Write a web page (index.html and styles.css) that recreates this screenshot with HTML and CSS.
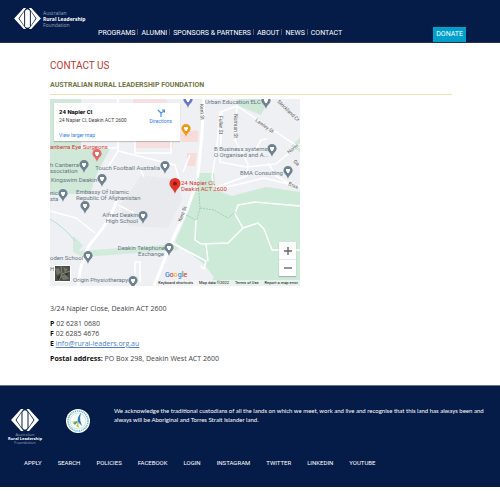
FILE: index.html
```html
<!DOCTYPE html>
<html lang="en">

<head>
  <meta charset="UTF-8">
  <meta name="viewport" content="width=device-width, initial-scale=1.0">
  <title>Contact Us - Australian Rural Leadership Foundation</title>
  <link rel="stylesheet" href="styles.css">
</head>

<body>
  <!-- shared symbols -->
  <svg class="defs" width="0" height="0" aria-hidden="true">
    <symbol id="mark" viewBox="0 0 56 44">
      <path d="M20 0 0 22 20 44h5L9 22 25 0zM36 0l20 22-20 22h-5l16-22L31 0z" fill="#fff" />
      <path d="M21 7 11 22l10 15zM35 7l10 15-10 15z" fill="#fff" />
      <path d="M23 6q5-7 10 0v32q-5 7-10 0z" fill="#fff" />
    </symbol>
    <symbol id="pin" viewBox="0 0 10 13">
      <path d="M5 0a4.6 4.6 0 0 0-4.6 4.6C.4 8 4 8.500 5 13c1-4.500 4.600-5 4.600-8.400A4.600 4.600 0 0 0 5 0z" />
      <path d="M3 3h4v2.500H6V7H4V5.500H3z" fill="#fff" />
    </symbol>
  </svg>

  <header class="header">
    <a class="logo" href="#">
      <svg class="logo-mark"><use href="#mark" /></svg>
      <span class="logo-text">Australian<br><b>Rural Leadership</b><br>Foundation</span>
    </a>
    <nav class="nav">
      <a href="#">PROGRAMS</a>
      <a href="#">ALUMNI</a>
      <a href="#">SPONSORS &amp; PARTNERS</a>
      <a href="#">ABOUT</a>
      <a href="#">NEWS</a>
      <a href="#">CONTACT</a>
    </nav>
    <a class="donate" href="#">DONATE</a>
  </header>

  <main class="main">
    <h1>CONTACT US</h1>
    <h2>AUSTRALIAN RURAL LEADERSHIP FOUNDATION</h2>

    <div class="map">
      <svg class="map-canvas" viewBox="50 99 250 187">
        <rect x="50" y="99" width="250" height="187" fill="#eef0f3" />
        <!-- blocks -->
        <path d="M50 99h31v50h29l-12 22-8 22-40 2z" fill="#cfe8d8" />
        <path d="M133 99h33l7 14v35h-38z" fill="#f6dfe0" />
        <path d="M181 133l17-3v12h-17zM187 153h10l-2 13h-8z" fill="#f8dcda" />
        <path d="M120 205l22-30 36 5 4 20-14 28-40-2z" fill="#e8eaed" />
        <path d="M237 99h32l-8 16-22-9zM291 146l9-8v14z" fill="#cfe8d8" />
        <path d="M73 236l10 9-4 6 100-7-1 6-95 7-10-5z" fill="#d2ebdc" />
        <path d="M197 173h17l2 17 16 6 34-9 34 5v94h-90l4-9-10-13-29-22 14-32z" fill="#cde9d8" />
        <path d="M50 219q14 8 25 22" fill="none" stroke="#b6dbe0" />
        <!-- streets -->
        <g class="roads">
          <path d="M118 99v52l-10 16M118 151l57 14 4 14M81 148h37M50 211l26 7 19 15M135 141v12h36v-12M139 167l5 10M118 205l16 8" />
          <path d="M222 112l-2 50 26 5 30-3 24-20M237 106l-2 34 13 24-1 12-33 12-2-12 5-30 3-34 17-6 63 42M254 152l7-12 6-1M268 163l8 13 14 8 10 2M214 190l30-7 20-5 36 9M183 172l7-17" />
          <path d="M196 220l-1 20 6 4 27-1 15-15 15-5 6 6 8 21h28M243 228l-8-14 3-9 17-3 45 4M172 243l34 18-2 8-4-3M206 244l2 17M135 286v-24h5v20" />
        </g>
        <g class="roads wide">
          <path d="M204 99l-2 34-2 22-3 28-9 24-16 34-18 45" />
          <path d="M117 200q-7 21-22 38-14 15-17 48" />
        </g>
        <path d="M198 178l2 30-3 12M200 208l14 2 14 8 8-6M186 215l10 5" fill="none" stroke="#8cbc9f" stroke-dasharray="2 1" stroke-width=".6" />

        <!-- places -->
        <g fill="#6f8290">
          <use href="#pin" x="79" y="160" width="10" height="13" />
          <use href="#pin" x="97" y="174" width="10" height="13" />
          <use href="#pin" x="160" y="161" width="10" height="13" />
          <use href="#pin" x="58" y="189" width="10" height="13" />
          <use href="#pin" x="80" y="201" width="10" height="13" />
          <use href="#pin" x="138" y="211" width="10" height="13" />
          <use href="#pin" x="164" y="243" width="10" height="13" />
          <use href="#pin" x="83" y="251" width="10" height="13" />
          <use href="#pin" x="128" y="276" width="10" height="13" />
          <use href="#pin" x="261" y="96" width="10" height="13" />
          <use href="#pin" x="267" y="144" width="10" height="13" />
          <use href="#pin" x="283" y="166" width="10" height="13" />
        </g>
        <use href="#pin" x="92" y="149" width="10" height="13" fill="#e66a6a" />
        <use href="#pin" x="183" y="95" width="10" height="13" fill="#6878c8" />
        <use href="#pin" x="181" y="124" width="10" height="13" fill="#f29a16" />
        <path d="M175 178a5.500 5.500 0 0 0-5.500 5.500c0 4.500 4.500 5 5.500 10.500 1-5.500 5.500-6 5.500-10.500A5.500 5.500 0 0 0 175 178z" fill="#e3342b" />
        <circle cx="175" cy="183.500" r="2" fill="#8f1713" />

        <g class="labels">
          <text x="50" y="149" class="red">anberra Eye Surgeons</text>
          <text x="79" y="167" text-anchor="end">h Canberra</text>
          <text x="50" y="173">ssociation</text>
          <text x="97" y="182" text-anchor="end">Kingswim Deakin</text>
          <text x="160" y="170" text-anchor="end">Touch Football Australia</text>
          <text x="50" y="195">nic</text>
          <text x="50" y="201">sta</text>
          <text x="76" y="194">Embassy Of Islamic</text>
          <text x="76" y="200">Republic Of Afghanistan</text>
          <text x="138" y="217" text-anchor="end">Alfred Deakin</text>
          <text x="138" y="223" text-anchor="end">High School</text>
          <text x="165" y="250" text-anchor="end">Deakin Telephone</text>
          <text x="164" y="256" text-anchor="end">Exchange</text>
          <text x="50" y="260">oden School</text>
          <text x="50" y="271">H</text>
          <text x="128" y="282" text-anchor="end">Origin Physiotherapy</text>
          <text x="205" y="104">Urban Education ELC</text>
          <text x="214" y="151">B Business systems</text>
          <text x="214" y="157">O Organised and A...</text>
          <text x="283" y="175" text-anchor="end">BMA Consulting</text>
          <text x="181" y="185" class="red">24 Napier Cl,</text>
          <text x="181" y="191" class="red">Deakin ACT 2600</text>
          <g class="street">
            <text transform="translate(200 104) rotate(87)">Kent St</text>
            <text transform="translate(219 116) rotate(90)">Fuller St</text>
            <text transform="translate(234 114) rotate(90)">Norman St</text>
            <text transform="translate(255 121) rotate(35)">Lawley St</text>
            <text transform="translate(277 102) rotate(44)">Strickland Cr</text>
            <text transform="translate(289 154) rotate(-38)">Norm</text>
            <text transform="translate(293 162) rotate(40)">Ga</text>
            <text transform="translate(288 185) rotate(22)">Bras</text>
            <text transform="translate(181 222) rotate(-68)">Kent St</text>
          </g>
        </g>
        <text x="165" y="277" class="google"><tspan fill="#4285f4">G</tspan><tspan fill="#ea4335">o</tspan><tspan fill="#fbbc05">o</tspan><tspan fill="#4285f4">g</tspan><tspan fill="#34a853">l</tspan><tspan fill="#ea4335">e</tspan></text>
      </svg>

      <div class="card">
        <div class="place">
          <strong>24 Napier Cl</strong>
          <span>24 Napier Cl, Deakin ACT 2600</span>
          <a href="#">View larger map</a>
        </div>
        <a class="directions" href="#">
          <svg width="8" height="8" viewBox="0 0 8 8"><path d="M4 8V4L1 1M4 4l3-2M5 1h2.500v2.500" fill="none" stroke="#4a8df0" stroke-width="1.200" /></svg>
          Directions
        </a>
      </div>
      <button class="satellite" type="button" aria-label="Show satellite imagery">
        <svg width="15" height="15" viewBox="0 0 15 15">
          <rect width="15" height="15" fill="#4c4f45" />
          <path d="M0 3l4-1 2 5-4 2zM8 1l5 2-3 4zM6 10l5-2 3 5-6 1z" fill="#74766b" />
          <path d="M2 11l3-2 1 5H3zM9 7l4 0-1 3z" fill="#2d342d" />
          <path d="M6 0l1 8-3 7M7 8l8-3" fill="none" stroke="#a09e92" stroke-width=".7" />
        </svg>
      </button>
      <div class="zoom">
        <button type="button" aria-label="Zoom in"><svg width="8" height="8" viewBox="0 0 8 8"><path d="M0 4h8M4 0v8" stroke="#666" stroke-width="1.400" /></svg></button>
        <button type="button" aria-label="Zoom out"><svg width="8" height="8" viewBox="0 0 8 8"><path d="M0 4h8" stroke="#666" stroke-width="1.400" /></svg></button>
      </div>
      <div class="terms">
        <span>Keyboard shortcuts</span>
        <span>Map data ©2022</span>
        <a href="#">Terms of Use</a>
        <a href="#">Report a map error</a>
      </div>
    </div>

    <div class="address">
      <p>3/24 Napier Close, Deakin ACT 2600</p>
      <p><b>P</b> 02 6281 0680<br><b>F</b> 02 6285 4676<br><b>E</b> <a href="mailto:info@rural-leaders.org.au">info@rural-leaders.org.au</a></p>
      <p><b>Postal address:</b> PO Box 298, Deakin West ACT 2600</p>
    </div>
  </main>

  <footer class="footer">
    <div class="footer-top">
      <a class="logo-stacked" href="#">
        <svg class="footer-mark"><use href="#mark" /></svg>
        <span class="logo-text">Australian<br><b>Rural Leadership</b><br>Foundation</span>
      </a>
      <svg class="badge" viewBox="0 0 24 24">
        <circle cx="12" cy="12" r="12" fill="#fff" />
        <circle cx="12" cy="12" r="10" fill="none" stroke="#69b9be" stroke-width="1.600" stroke-dasharray="1.200 .7" />
        <circle cx="12" cy="12" r="8" fill="#fff" stroke="#9bd2dc" stroke-width=".6" />
        <path d="M15 4c-3 3-4 6-3 9l4 4c-1-4-3-6-1-13z" fill="#2b7fb8" />
        <path d="M5 13l6-1 2 3-4-1zM12 14l1 5-3-2z" fill="#b8c93a" />
        <path d="M7 14l5-2-3 4z" fill="#32a5a0" />
      </svg>
      <p>We acknowledge the traditional custodians of all the lands on which we meet, work and live and recognise that this land has always been and always will be Aboriginal and Torres Strait Islander land.</p>
    </div>
    <nav class="footer-nav">
      <a href="#">APPLY</a>
      <a href="#">SEARCH</a>
      <a href="#">POLICIES</a>
      <a href="#">FACEBOOK</a>
      <a href="#">LOGIN</a>
      <a href="#">INSTAGRAM</a>
      <a href="#">TWITTER</a>
      <a href="#">LINKEDIN</a>
      <a href="#">YOUTUBE</a>
    </nav>
  </footer>
</body>

</html>
```
FILE: styles.css
```css
body {
  margin: 0;
  background: #fff;
  font-family: Roboto, "Liberation Sans", sans-serif;
  font-size: 7px;
  color: #444;
}

a {
  color: inherit;
  text-decoration: none;
}

.defs {
  position: absolute;
}

/* header */
.header {
  display: flex;
  align-items: flex-end;
  box-sizing: border-box;
  height: 43px;
  padding: 0 34px 0 14px;
  background: #051c48;
  border-bottom: 1px solid #2b3044;
  color: #fff;
}

.logo {
  display: flex;
  align-items: center;
  align-self: flex-start;
  gap: 2px;
  width: 84px;
  padding-top: 8px;
}

.logo-mark {
  width: 27px;
  height: 21px;
  flex: none;
}

.logo-text {
  font-family: "Open Sans", sans-serif;
  font-size: 5px;
  line-height: 6px;
  color: #97a3bb;
  white-space: nowrap;
}

.logo-text b {
  color: #fff;
}

.nav {
  display: flex;
  flex: 1;
  padding-bottom: 4px;
  line-height: 9px;
  white-space: nowrap;
}

.nav a + a::before {
  content: "";
  display: inline-block;
  height: 6px;
  margin: 0 3px 0 2px;
  border-left: 1px solid #49556f;
}

.donate {
  padding: 0 3px;
  background: #00a0cd;
  line-height: 15px;
}

/* content */
.main {
  padding: 16px 48px 0 50px;
}

h1 {
  margin: 0;
  font-size: 10px;
  line-height: 13px;
  font-weight: 400;
  color: #c0392f;
}

h2 {
  margin: 8px 0 4px;
  padding-bottom: 3px;
  border-bottom: 1px solid #f3dfb5;
  font-size: 7px;
  line-height: 11px;
  font-weight: 700;
  color: #71773f;
}

.map {
  position: relative;
  width: 250px;
}

.map-canvas {
  display: block;
  width: 100%;
}

.roads {
  fill: none;
  stroke: #fff;
  stroke-width: 1.5;
  stroke-linejoin: round;
}

.wide {
  stroke-width: 3;
}

.labels {
  font-size: 6px;
  fill: #66757f;
  stroke: none;
}

.labels .red {
  fill: #cf3a35;
}

.labels .street {
  font-size: 5px;
  fill: #555;
}

.google {
  font-size: 7px;
  font-weight: 500;
}

.card {
  position: absolute;
  top: 4px;
  left: 4px;
  display: flex;
  justify-content: space-between;
  box-sizing: border-box;
  width: 126px;
  height: 38px;
  padding: 4px 8px 4px 5px;
  background: #fff;
  box-shadow: 0 1px 1px rgba(0, 0, 0, .2);
  font-size: 5px;
  line-height: 8px;
}

.place {
  display: flex;
  flex-direction: column;
}

.place strong {
  font-size: 6px;
  line-height: 9px;
  color: #000;
}

.place a {
  margin-top: 7px;
  color: #2f7cf0;
}

.directions {
  display: flex;
  flex-direction: column;
  align-items: center;
  padding-top: 2px;
  color: #2f7cf0;
}

.satellite {
  position: absolute;
  left: 4px;
  bottom: 4px;
  padding: 1px;
  border: 0;
  background: #fff;
}

.satellite svg {
  display: block;
}

.zoom {
  position: absolute;
  right: 4px;
  bottom: 10px;
  width: 17px;
  background: #fff;
  box-shadow: 0 1px 1px rgba(0, 0, 0, .2);
}

.zoom button {
  display: flex;
  align-items: center;
  justify-content: center;
  width: 17px;
  height: 17px;
  padding: 0;
  border: 0;
  background: none;
}

.zoom button + button {
  border-top: 1px solid #e6e6e6;
}

.terms {
  position: absolute;
  right: 0;
  bottom: 0;
  display: flex;
  gap: 6px;
  padding: 0 2px;
  background: rgba(245, 245, 245, .7);
  font-size: 4px;
  line-height: 6px;
  color: #000;
}

.address {
  margin-top: 18px;
  font-family: "Open Sans", sans-serif;
  font-size: 7px;
  line-height: 10px;
}

.address p {
  margin: 0 0 5px;
}

.address b {
  color: #111;
}

.address a {
  color: #4c7fc4;
  text-decoration: underline;
}

/* footer */
.footer {
  margin-top: 21px;
  padding: 23px 8px 20px;
  background: #051c48;
  border-top: 1px solid #65758a;
  color: #fff;
}

.footer-top {
  display: flex;
  align-items: flex-start;
}

.logo-stacked {
  flex: none;
  width: 34px;
  text-align: center;
}

.footer-mark {
  display: block;
  width: 28px;
  height: 22px;
  margin: 0 auto 2px;
}

.logo-stacked .logo-text {
  display: block;
  font-size: 4px;
  line-height: 4px;
}

.badge {
  flex: none;
  width: 24px;
  height: 24px;
  margin: 0 24px;
}

.footer p {
  margin: -3px 0 0;
  font-family: Lato, sans-serif;
  font-size: 6px;
  line-height: 9px;
}

.footer-nav {
  display: flex;
  gap: 16px;
  margin-top: 13px;
  padding-left: 16px;
  font-size: 6px;
  line-height: 9px;
}
```
